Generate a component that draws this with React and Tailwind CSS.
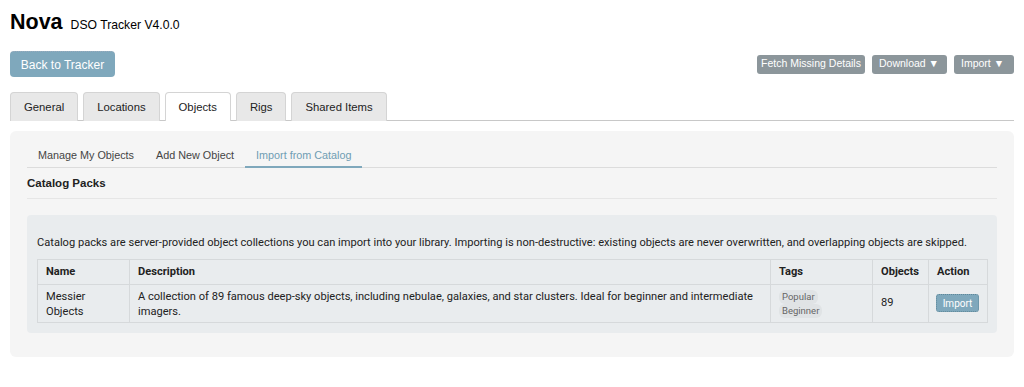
import React from "react";

export default function App() {
  const tabs = ["General", "Locations", "Objects", "Rigs", "Shared Items"];
  return (
    <div className="w-[1024px] h-[387px] bg-white text-[#222] overflow-hidden" style={{ fontFamily: '"Liberation Sans", Arial, sans-serif' }}>
      <div className="px-[10px] pt-[12px]">
        <div className="flex items-baseline h-[26px]">
          <span className="text-[21.5px] font-bold leading-none text-black">Nova</span>
          <span className="ml-[8px] text-[12.2px] leading-none text-black">DSO Tracker V4.0.0</span>
        </div>
        <div className="mt-[13px] flex items-center justify-between">
          <button className="h-[26px] w-[105px] rounded-[4px] bg-[#7fa8bc] text-white text-[12px] border-t border-dotted border-[#9ab]">Back to Tracker</button>
          <div className="flex gap-[7px]">
            <button className="h-[19px] w-[108px] rounded-[3px] bg-[#8c969b] text-white text-[10.5px]">Fetch Missing Details</button>
            <button className="h-[19px] w-[75px] text-left pl-[7px] rounded-[3px] bg-[#8c969b] text-white text-[10.5px]">Download ▼</button>
            <button className="h-[19px] w-[60px] text-left pl-[7px] rounded-[3px] bg-[#8c969b] text-white text-[10.5px]">Import ▼</button>
          </div>
        </div>
        <div className="mt-[15px] flex gap-[5px] border-b border-[#c8c8c8] h-[29px]">
          {tabs.map((t) => (
            <div
              key={t}
              className={
                "h-[29px] flex items-center px-[13px] text-[11.3px] rounded-t-[4px] border border-b-0 border-[#d4d4d4] " +
                (t === "Objects" ? "bg-white" : "bg-[#e8e8e8]")
              }
            >
              {t}
            </div>
          ))}
        </div>
        <div className="mt-[10px] h-[226px] rounded-[6px] bg-[#f5f5f5] px-[17px] pt-[13px]">
          <div className="flex h-[24px] border-b border-[#dcdcdc] text-[10.8px] text-[#444]">
            <div className="px-[11px] flex items-start pt-[3px]">Manage My Objects</div>
            <div className="px-[11px] flex items-start pt-[3px]">Add New Object</div>
            <div className="px-[11px] flex items-start pt-[3px] text-[#6f9db3] border-b-2 border-[#7fa8bc] -mb-[1px]">Import from Catalog</div>
          </div>
          <div className="h-[31px] pt-[2px] flex items-center border-b border-[#e6e6e6] text-[11.5px] font-bold">Catalog Packs</div>
          <div className="mt-[16px] rounded-[4px] bg-[#e9ecee] px-[10px] pt-[20px] pb-[10px]" style={{ fontFamily: 'Roboto, "Liberation Sans", sans-serif' }}>
            <p className="text-[11.1px] leading-[16px] text-[#222] whitespace-nowrap">
              Catalog packs are server-provided object collections you can import into your library. Importing is non-destructive: existing objects are never overwritten, and overlapping objects are skipped.
            </p>
            <table className="mt-[8px] w-[950px] border-collapse text-[11.1px] table-fixed">
              <colgroup>
                <col style={{ width: 92 }} />
                <col style={{ width: 641 }} />
                <col style={{ width: 102 }} />
                <col style={{ width: 56 }} />
                <col style={{ width: 59 }} />
              </colgroup>
              <thead>
                <tr className="h-[25px] text-left">
                  {["Name", "Description", "Tags", "Objects", "Action"].map((h) => (
                    <th key={h} className="border border-[#d6d9db] px-[8px] font-bold">{h}</th>
                  ))}
                </tr>
              </thead>
              <tbody>
                <tr className="h-[38px] align-middle">
                  <td className="border border-[#d6d9db] px-[8px] leading-[15px]">Messier<br />Objects</td>
                  <td className="border border-[#d6d9db] px-[8px] leading-[15px]">
                    A collection of 89 famous deep-sky objects, including nebulae, galaxies, and star clusters. Ideal for beginner and intermediate imagers.
                  </td>
                  <td className="border border-[#d6d9db] px-[8px]">
                    <div className="flex flex-col items-start">
                      <span className="rounded-[6px] bg-[#e0e3e5] px-[3px] text-[9.5px] leading-[14px] text-[#666]">Popular</span>
                      <span className="rounded-[6px] bg-[#e0e3e5] px-[3px] text-[9.5px] leading-[14px] text-[#666]">Beginner</span>
                    </div>
                  </td>
                  <td className="border border-[#d6d9db] px-[8px]">89</td>
                  <td className="border border-[#d6d9db] px-[7px]">
                    <button className="h-[18px] w-[43px] rounded-[3px] bg-[#7fa8bc] text-white text-[10px] border border-dotted border-[#5f8799]">Import</button>
                  </td>
                </tr>
              </tbody>
            </table>
          </div>
        </div>
      </div>
    </div>
  );
}
